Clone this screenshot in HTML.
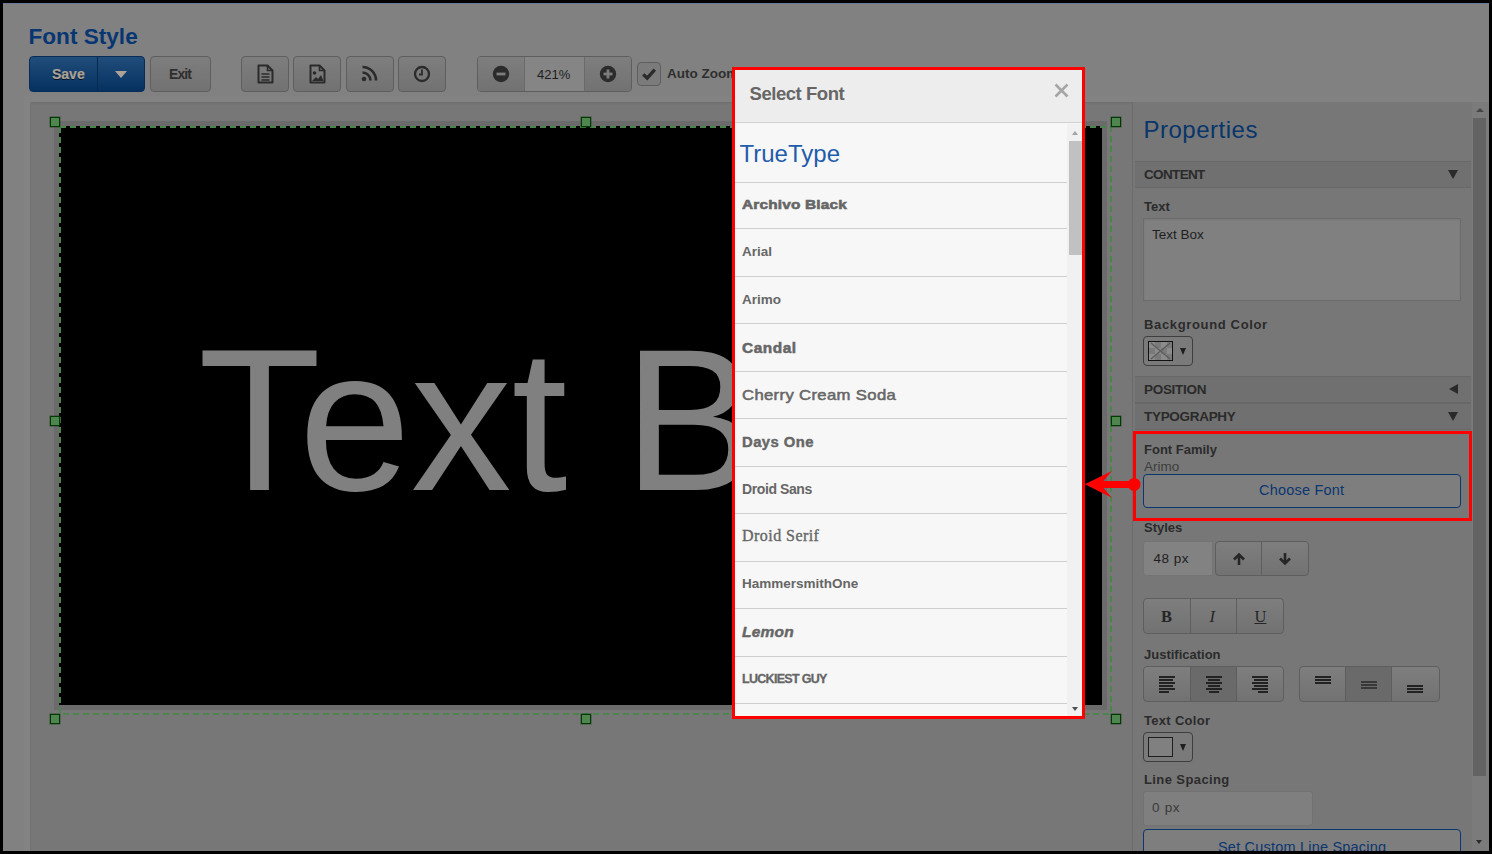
<!DOCTYPE html>
<html><head><meta charset="utf-8">
<style>
*{box-sizing:border-box;margin:0;padding:0}
html,body{width:1492px;height:854px;overflow:hidden;background:#000}
body{position:relative;font-family:"Liberation Sans",sans-serif}
.a{position:absolute}
#page{position:absolute;left:3px;top:3px;width:1486px;height:848px;background:#818181;overflow:hidden}
.t{position:absolute;white-space:nowrap;line-height:1}
.btn{position:absolute;border:1px solid #5e5e5e;border-radius:4px;background:linear-gradient(#7e7e7e,#727272)}
.hdl{position:absolute;width:10px;height:10px;border:1px solid #003a00;background:#4f854f;box-shadow:0 0 0 0.5px rgba(0,40,0,.5)}
</style></head><body>
<div id="page">
  <div class="a" style="left:0;top:0;width:1486px;height:1px;background:#6b7898"></div>
  <!-- left light strip line -->
  <div class="a" style="left:21px;top:99px;width:6px;height:760px;background:#7e7e7e"></div>
</div>

<!-- everything positioned in body coords -->
<!-- workspace -->
<div class="a" style="left:24px;top:96px;width:1448px;height:6px;background:#828282"></div>
<div class="a" style="left:24px;top:96px;width:6px;height:760px;background:#838383"></div>
<div class="a" style="left:30px;top:102px;width:1460px;height:752px;background:#777777"></div>
<div class="a" style="left:30px;top:102px;width:1102px;height:3px;background:linear-gradient(#6f6f6f,#777777)"></div>
<div class="a" style="left:30px;top:102px;width:2px;height:749px;background:linear-gradient(90deg,#727272,#777777)"></div>
<div class="a" style="left:1132px;top:102px;width:1px;height:752px;background:#6b6b6b"></div>
<!-- text box -->
<div class="a" style="left:54px;top:121px;width:1053px;height:589px;background:#6b6b6b"></div>
<div class="a" style="left:59px;top:126px;width:1043px;height:579px;background:#000"></div>
<div class="t" style="left:198px;top:320px;font-size:201.5px;color:#808080">Text Box</div>
<svg class="a" style="left:0;top:0" width="1492" height="854">
  <rect x="60" y="127" width="1051" height="587" fill="none" stroke="#4a864a" stroke-width="2" stroke-dasharray="6 4"/>
</svg>
<div class="hdl" style="left:50px;top:117px"></div>
<div class="hdl" style="left:581px;top:117px"></div>
<div class="hdl" style="left:1111px;top:117px"></div>
<div class="hdl" style="left:50px;top:416px"></div>
<div class="hdl" style="left:1111px;top:416px"></div>
<div class="hdl" style="left:50px;top:714px"></div>
<div class="hdl" style="left:581px;top:714px"></div>
<div class="hdl" style="left:1111px;top:714px"></div>

<!-- title -->
<div class="t" style="left:28.5px;top:26px;font-size:22.6px;font-weight:bold;color:#073672">Font Style</div>

<!-- Save group -->
<div class="a" style="left:29px;top:56px;width:116px;height:36px;border:1px solid #082c58;border-radius:4px;background:linear-gradient(#214d7b,#04315f)"></div>
<div class="a" style="left:97px;top:57px;width:1px;height:34px;background:#082a52"></div>
<div class="t" style="left:52px;top:67px;font-size:14px;font-weight:bold;color:#aca298;text-shadow:0 1px 0 #001020;-webkit-text-stroke:0.2px #aca298">Save</div>
<div class="a" style="left:115px;top:71px;width:0;height:0;border-left:6px solid transparent;border-right:6px solid transparent;border-top:7px solid #aca298"></div>

<!-- Exit -->
<div class="btn" style="left:150px;top:56px;width:61px;height:36px"></div>
<div class="t" style="left:169px;top:67px;font-size:14px;font-weight:bold;color:#2e2e2e;letter-spacing:-0.9px">Exit</div>

<!-- icon buttons -->
<div class="btn" style="left:241px;top:56px;width:48px;height:36px"></div>
<div class="btn" style="left:293px;top:56px;width:48px;height:36px"></div>
<div class="btn" style="left:346px;top:56px;width:48px;height:36px"></div>
<div class="btn" style="left:398px;top:56px;width:48px;height:36px"></div>
<svg class="a" style="left:257px;top:64px" width="17" height="20" viewBox="0 0 17 20"><path d="M1.5 1.5h9l5 5v12h-14z" fill="none" stroke="#2b2b2b" stroke-width="2" stroke-linejoin="round"/><path d="M10.5 1.5v5h5" fill="none" stroke="#2b2b2b" stroke-width="1.6"/><path d="M4.5 10h8M4.5 13h8M4.5 16h8" stroke="#2b2b2b" stroke-width="1.5"/></svg>
<svg class="a" style="left:309px;top:64px" width="17" height="20" viewBox="0 0 17 20"><path d="M1.5 1.5h9l5 5v12h-14z" fill="none" stroke="#2b2b2b" stroke-width="2" stroke-linejoin="round"/><path d="M10.5 1.5v5h5" fill="none" stroke="#2b2b2b" stroke-width="1.6"/><circle cx="5.5" cy="9" r="1.8" fill="#2b2b2b"/><path d="M3 17l4-4 2 2 3-4 2.5 6z" fill="#2b2b2b"/></svg>
<svg class="a" style="left:361px;top:65px" width="17" height="17" viewBox="0 0 17 17"><circle cx="3" cy="14" r="2.3" fill="#2b2b2b"/><path d="M1.5 7.5a8 8 0 0 1 8 8" fill="none" stroke="#2b2b2b" stroke-width="2.6"/><path d="M1.5 2a13.5 13.5 0 0 1 13.5 13.5" fill="none" stroke="#2b2b2b" stroke-width="2.6"/></svg>
<svg class="a" style="left:413px;top:65px" width="18" height="18" viewBox="0 0 18 18"><circle cx="9" cy="9" r="7" fill="none" stroke="#2b2b2b" stroke-width="2.3"/><path d="M9 4.5v5h-3" fill="none" stroke="#2b2b2b" stroke-width="1.8"/></svg>

<!-- zoom group -->
<div class="a" style="left:477px;top:56px;width:155px;height:36px;border:1px solid #5e5e5e;border-radius:4px;background:#858585;overflow:hidden">
  <div class="a" style="left:0;top:0;width:47px;height:34px;background:linear-gradient(#7e7e7e,#727272);border-right:1px solid #6a6a6a"></div>
  <div class="a" style="left:106px;top:0;width:48px;height:34px;background:linear-gradient(#7e7e7e,#727272);border-left:1px solid #6a6a6a"></div>
</div>
<svg class="a" style="left:492px;top:65px" width="18" height="18" viewBox="0 0 18 18"><circle cx="9" cy="9" r="8.2" fill="#2b2b2b"/><rect x="4.5" y="7.6" width="9" height="2.8" fill="#7c7c7c"/></svg>
<svg class="a" style="left:599px;top:65px" width="18" height="18" viewBox="0 0 18 18"><circle cx="9" cy="9" r="8.2" fill="#2b2b2b"/><rect x="4.5" y="7.6" width="9" height="2.8" fill="#7c7c7c"/><rect x="7.6" y="4.5" width="2.8" height="9" fill="#7c7c7c"/></svg>
<div class="t" style="left:537px;top:68px;font-size:13px;color:#1e1e1e">421%</div>

<!-- checkbox -->
<div class="a" style="left:637px;top:62px;width:24px;height:24px;border:1px solid #5e5e5e;border-radius:4px;background:#7b7b7b"></div>
<svg class="a" style="left:641px;top:66px" width="16" height="16" viewBox="0 0 16 16"><path d="M2.3 8.3l3.9 3.9 7.6-8.6" fill="none" stroke="#2b2b2b" stroke-width="3.3"/></svg>
<div class="t" style="left:667px;top:67px;font-size:13.5px;font-weight:bold;color:#2e2e2e">Auto Zoom</div>
<!-- properties panel -->
<div class="t" style="left:1143.5px;top:118.1px;font-size:24px;color:#08366b;letter-spacing:0.5px">Properties</div>
<div class="a" style="left:1135px;top:161px;width:336px;height:27px;background:#707070;border-top:1px solid #686868;border-bottom:1px solid #686868"></div>
<div class="t" style="left:1144px;top:168.0px;font-size:13.5px;color:#2a2a2a;font-weight:bold;letter-spacing:-0.65px">CONTENT</div>
<div class="a" style="left:1448px;top:170px;width:0;height:0;border-left:5px solid transparent;border-right:5px solid transparent;border-top:9px solid #2a2a2a"></div>
<div class="t" style="left:1144px;top:200.1px;font-size:13px;color:#2b2b2b;font-weight:bold">Text</div>
<div class="a" style="left:1143px;top:218px;width:318px;height:83px;background:#808080;border:1px solid #6c6c6c;box-shadow:inset 0 1px 2px rgba(0,0,0,.08)"></div>
<div class="t" style="left:1152px;top:228.1px;font-size:13.5px;color:#1e1e1e;">Text Box</div>
<div class="t" style="left:1144px;top:317.6px;font-size:13px;color:#2b2b2b;font-weight:bold;letter-spacing:0.65px">Background Color</div>
<div class="a" style="left:1143px;top:336px;width:50px;height:30px;border:1px solid #3e3e3e;border-radius:4px;background:#7a7a7a"></div>
<svg class="a" style="left:1148px;top:341px" width="25" height="20" viewBox="0 0 25 20"><rect width="25" height="20" fill="#7a7a7a"/><rect x="1" y="1" width="6" height="6" fill="#8c8c8c"/><rect x="7" y="7" width="6" height="6" fill="#8c8c8c"/><rect x="13" y="1" width="6" height="6" fill="#8c8c8c"/><rect x="19" y="7" width="6" height="6" fill="#8c8c8c"/><rect x="1" y="13" width="6" height="6" fill="#8c8c8c"/><rect x="13" y="13" width="6" height="6" fill="#8c8c8c"/><path d="M3 2l19 16M22 2L3 18" stroke="#5e5e5e" stroke-width="1.6"/><rect x="0.5" y="0.5" width="24" height="19" fill="none" stroke="#111" stroke-width="1"/></svg>
<div class="a" style="left:1179.5px;top:348px;width:0;height:0;border-left:3.6px solid transparent;border-right:3.6px solid transparent;border-top:7px solid #1e1e1e"></div>
<div class="a" style="left:1135px;top:376px;width:336px;height:27px;background:#707070;border-top:1px solid #686868;border-bottom:1px solid #686868"></div>
<div class="t" style="left:1144px;top:383.0px;font-size:13.5px;color:#2a2a2a;font-weight:bold;letter-spacing:-0.3px">POSITION</div>
<div class="a" style="left:1449px;top:384px;width:0;height:0;border-top:5px solid transparent;border-bottom:5px solid transparent;border-right:9px solid #2a2a2a"></div>
<div class="a" style="left:1135px;top:403px;width:336px;height:27px;background:#707070;border-top:1px solid #686868;border-bottom:1px solid #686868"></div>
<div class="t" style="left:1144px;top:410.3px;font-size:13.5px;color:#2a2a2a;font-weight:bold;letter-spacing:-0.3px">TYPOGRAPHY</div>
<div class="a" style="left:1448px;top:412px;width:0;height:0;border-left:5px solid transparent;border-right:5px solid transparent;border-top:9px solid #2a2a2a"></div>
<div class="t" style="left:1144px;top:443.2px;font-size:13px;color:#2b2b2b;font-weight:bold">Font Family</div>
<div class="t" style="left:1144px;top:459.5px;font-size:13.5px;color:#3e3e3e;">Arimo</div>
<div class="a" style="left:1143px;top:474px;width:318px;height:34px;border:1.5px solid #0b3670;border-radius:4px;background:#7e7e7e"></div>
<div class="t" style="left:1259px;top:483.1px;font-size:14.5px;color:#0b3670;letter-spacing:0.2px">Choose Font</div>
<div class="t" style="left:1144px;top:521.1px;font-size:13px;color:#2b2b2b;font-weight:bold">Styles</div>
<div class="a" style="left:1143px;top:541px;width:70px;height:35px;background:#828282;border:1px solid #747474;border-radius:3px 0 0 3px"></div>
<div class="t" style="left:1153.5px;top:552.4px;font-size:13.5px;color:#1e1e1e;letter-spacing:0.5px">48 px</div>
<div class="btn" style="left:1215px;top:541px;width:94px;height:35px"></div>
<div class="a" style="left:1261px;top:542px;width:1px;height:33px;background:#5e5e5e"></div>
<svg class="a" style="left:1232px;top:552px" width="14" height="14" viewBox="0 0 14 14"><path d="M7 13V3M2 7.5L7 2.5l5 5" fill="none" stroke="#262626" stroke-width="2.6"/></svg>
<svg class="a" style="left:1278px;top:552px" width="14" height="14" viewBox="0 0 14 14"><path d="M7 1v10M2 6.5l5 5 5-5" fill="none" stroke="#262626" stroke-width="2.6"/></svg>
<div class="btn" style="left:1143px;top:598px;width:141px;height:36px"></div>
<div class="a" style="left:1190px;top:599px;width:1px;height:34px;background:#5e5e5e"></div><div class="a" style="left:1236px;top:599px;width:1px;height:34px;background:#5e5e5e"></div>
<div class="t" style="left:1161px;top:608.6px;font-size:16.5px;color:#262626;font-family:&quot;Liberation Serif&quot;,serif;font-weight:bold">B</div>
<div class="t" style="left:1209.5px;top:608.6px;font-size:16.5px;color:#262626;font-family:&quot;Liberation Serif&quot;,serif;font-style:italic">I</div>
<div class="t" style="left:1254.5px;top:608.6px;font-size:16.5px;color:#262626;font-family:&quot;Liberation Serif&quot;,serif;text-decoration:underline">U</div>
<div class="t" style="left:1144px;top:648.1px;font-size:13px;color:#2b2b2b;font-weight:bold">Justification</div>
<div class="btn" style="left:1143px;top:666px;width:141px;height:36px;overflow:hidden"><div class="a" style="left:46px;top:0;width:46px;height:34px;background:#6a6a6a"></div></div>
<div class="a" style="left:1190px;top:667px;width:1px;height:34px;background:#5e5e5e"></div><div class="a" style="left:1236px;top:667px;width:1px;height:34px;background:#5e5e5e"></div>
<div class="btn" style="left:1299px;top:666px;width:141px;height:36px;overflow:hidden"><div class="a" style="left:45px;top:0;width:46px;height:34px;background:#6a6a6a"></div></div>
<div class="a" style="left:1345px;top:667px;width:1px;height:34px;background:#5e5e5e"></div><div class="a" style="left:1391px;top:667px;width:1px;height:34px;background:#5e5e5e"></div>
<div class="a" style="left:1159px;top:676px;width:16px;height:1.5px;background:#222"></div>
<div class="a" style="left:1159px;top:679px;width:14px;height:1.5px;background:#222"></div>
<div class="a" style="left:1159px;top:682px;width:16px;height:1.5px;background:#222"></div>
<div class="a" style="left:1159px;top:685px;width:14px;height:1.5px;background:#222"></div>
<div class="a" style="left:1159px;top:688px;width:16px;height:1.5px;background:#222"></div>
<div class="a" style="left:1159px;top:691px;width:10px;height:1.5px;background:#222"></div>
<div class="a" style="left:1206px;top:676px;width:16px;height:1.5px;background:#222"></div>
<div class="a" style="left:1208px;top:679px;width:12px;height:1.5px;background:#222"></div>
<div class="a" style="left:1206px;top:682px;width:16px;height:1.5px;background:#222"></div>
<div class="a" style="left:1208px;top:685px;width:12px;height:1.5px;background:#222"></div>
<div class="a" style="left:1206px;top:688px;width:16px;height:1.5px;background:#222"></div>
<div class="a" style="left:1209px;top:691px;width:10px;height:1.5px;background:#222"></div>
<div class="a" style="left:1252px;top:676px;width:16px;height:1.5px;background:#222"></div>
<div class="a" style="left:1254px;top:679px;width:14px;height:1.5px;background:#222"></div>
<div class="a" style="left:1252px;top:682px;width:16px;height:1.5px;background:#222"></div>
<div class="a" style="left:1254px;top:685px;width:14px;height:1.5px;background:#222"></div>
<div class="a" style="left:1252px;top:688px;width:16px;height:1.5px;background:#222"></div>
<div class="a" style="left:1258px;top:691px;width:10px;height:1.5px;background:#222"></div>
<div class="a" style="left:1315px;top:676px;width:16px;height:1.5px;background:#222"></div>
<div class="a" style="left:1315px;top:679px;width:16px;height:1.5px;background:#222"></div>
<div class="a" style="left:1315px;top:682px;width:16px;height:1.5px;background:#222"></div>
<div class="a" style="left:1361px;top:680.5px;width:16px;height:2px;background:#383838"></div>
<div class="a" style="left:1361px;top:683.5px;width:16px;height:2px;background:#383838"></div>
<div class="a" style="left:1361px;top:686.5px;width:16px;height:2px;background:#383838"></div>
<div class="a" style="left:1407px;top:685px;width:16px;height:1.5px;background:#222"></div>
<div class="a" style="left:1407px;top:688px;width:16px;height:1.5px;background:#222"></div>
<div class="a" style="left:1407px;top:691px;width:16px;height:1.5px;background:#222"></div>
<div class="t" style="left:1144px;top:713.7px;font-size:13px;color:#2b2b2b;font-weight:bold;letter-spacing:0.3px">Text Color</div>
<div class="a" style="left:1143px;top:732px;width:50px;height:30px;border:1px solid #3e3e3e;border-radius:4px;background:#7a7a7a"></div>
<div class="a" style="left:1148px;top:737px;width:25px;height:20px;border:1.5px solid #1e1e1e;background:#808080"></div>
<div class="a" style="left:1179.5px;top:744px;width:0;height:0;border-left:3.6px solid transparent;border-right:3.6px solid transparent;border-top:7px solid #1e1e1e"></div>
<div class="t" style="left:1144px;top:772.9px;font-size:13px;color:#2b2b2b;font-weight:bold;letter-spacing:0.4px">Line Spacing</div>
<div class="a" style="left:1143px;top:791px;width:170px;height:35px;background:#7f7f7f;border:1px solid #727272;border-radius:3px"></div>
<div class="t" style="left:1152px;top:801.4px;font-size:13.5px;color:#3a3a3a;letter-spacing:0.7px">0 px</div>
<div class="a" style="left:1143px;top:829px;width:318px;height:34px;border:1.5px solid #0b3670;border-radius:4px;background:#7e7e7e"></div>
<div class="t" style="left:1218px;top:840.3px;font-size:14.5px;color:#0b3670;letter-spacing:0.2px">Set Custom Line Spacing</div>
<div class="a" style="left:1472px;top:102px;width:17px;height:749px;background:#7b7b7b"></div>
<div class="a" style="left:1473px;top:118px;width:13px;height:658px;background:#636363"></div>
<div class="a" style="left:1476px;top:107.5px;width:0;height:0;border-left:4px solid transparent;border-right:4px solid transparent;border-bottom:4.5px solid #474747"></div>
<div class="a" style="left:1476px;top:840px;width:0;height:0;border-left:3.5px solid transparent;border-right:3.5px solid transparent;border-top:4px solid #2a2a2a"></div>

<!-- modal -->
<div class="a" style="left:732px;top:67px;width:353px;height:652px;border:3px solid #ff0000;background:#f7f7f7"></div>
<div class="a" style="left:735px;top:70px;width:347px;height:53px;background:#ededed;border-bottom:1px solid #d2d2d2"></div>
<div class="t" style="left:749.5px;top:85px;font-size:18.5px;font-weight:bold;color:#666;letter-spacing:-0.45px">Select Font</div>
<svg class="a" style="left:1054px;top:83px" width="15" height="15" viewBox="0 0 15 15"><path d="M1.5 1.5l12 12M13.5 1.5l-12 12" stroke="#a6a6a6" stroke-width="2.6"/></svg>
<div class="t" style="left:739.5px;top:141.5px;font-size:24px;color:#1f5cab">TrueType</div>
<div class="a" style="left:735px;top:182px;width:332px;height:1px;background:#cfcfcf"></div>
<div class="a" style="left:735px;top:228px;width:332px;height:1px;background:#cfcfcf"></div>
<div class="a" style="left:735px;top:276px;width:332px;height:1px;background:#cfcfcf"></div>
<div class="a" style="left:735px;top:323px;width:332px;height:1px;background:#cfcfcf"></div>
<div class="a" style="left:735px;top:371px;width:332px;height:1px;background:#cfcfcf"></div>
<div class="a" style="left:735px;top:418px;width:332px;height:1px;background:#cfcfcf"></div>
<div class="a" style="left:735px;top:466px;width:332px;height:1px;background:#cfcfcf"></div>
<div class="a" style="left:735px;top:513px;width:332px;height:1px;background:#cfcfcf"></div>
<div class="a" style="left:735px;top:561px;width:332px;height:1px;background:#cfcfcf"></div>
<div class="a" style="left:735px;top:608px;width:332px;height:1px;background:#cfcfcf"></div>
<div class="a" style="left:735px;top:656px;width:332px;height:1px;background:#cfcfcf"></div>
<div class="a" style="left:735px;top:703px;width:332px;height:1px;background:#cfcfcf"></div>
<div class="t" style="left:742px;top:198.3px;color:#666;font-weight:bold;font-size:13.4px;letter-spacing:0.15px;-webkit-text-stroke:0.6px #666;transform:scaleX(1.15);transform-origin:0 0">Archivo Black</div>
<div class="t" style="left:742px;top:244.8px;color:#666;font-weight:bold;font-size:13.5px">Arial</div>
<div class="t" style="left:742px;top:293.2px;color:#666;font-weight:bold;font-size:13.5px">Arimo</div>
<div class="t" style="left:742px;top:340.9px;color:#666;font-weight:bold;font-size:14px;letter-spacing:0.5px;-webkit-text-stroke:0.5px #666;transform:scaleX(1.1);transform-origin:0 0">Candal</div>
<div class="t" style="left:742px;top:388.1px;color:#666;font-size:14.5px;letter-spacing:0.3px;-webkit-text-stroke:0.5px #666;transform:scaleX(1.15);transform-origin:0 0">Cherry Cream Soda</div>
<div class="t" style="left:742px;top:435.1px;color:#666;font-weight:bold;font-size:14px;letter-spacing:0.4px;-webkit-text-stroke:0.4px #666;transform:scaleX(1.06);transform-origin:0 0">Days One</div>
<div class="t" style="left:742px;top:482.3px;color:#666;font-weight:bold;font-size:14px;letter-spacing:-0.4px">Droid Sans</div>
<div class="t" style="left:742px;top:528.4px;color:#666;font-family:&quot;Liberation Serif&quot;,serif;font-size:16px;letter-spacing:0.45px;-webkit-text-stroke:0.35px #666">Droid Serif</div>
<div class="t" style="left:742px;top:577.0px;color:#666;font-weight:bold;font-size:13.5px">HammersmithOne</div>
<div class="t" style="left:742px;top:624.1px;color:#666;font-weight:bold;font-style:italic;font-size:15.5px;letter-spacing:0.2px;-webkit-text-stroke:0.45px #666">Lemon</div>
<div class="t" style="left:742px;top:673.4px;color:#666;font-weight:bold;font-size:12.5px;letter-spacing:-0.7px;-webkit-text-stroke:0.3px #666">LUCKIEST GUY</div>

<!-- scrollbar -->
<div class="a" style="left:1067px;top:124px;width:15px;height:592px;background:#f1f1f1"></div>
<div class="a" style="left:1069px;top:141px;width:13px;height:114px;background:#c1c1c1"></div>
<div class="a" style="left:1072px;top:130.5px;width:0;height:0;border-left:3.5px solid transparent;border-right:3.5px solid transparent;border-bottom:4px solid #a3a3a3"></div>
<div class="a" style="left:1072px;top:707px;width:0;height:0;border-left:3.5px solid transparent;border-right:3.5px solid transparent;border-top:4px solid #505050"></div>

<!-- annotation -->
<div class="a" style="left:1133px;top:431px;width:339px;height:90px;border:3px solid #ff0000"></div>
<svg class="a" style="left:1080px;top:465px" width="65" height="40" viewBox="0 0 65 40">
  <path d="M4.9 19.2L31.85 6.1L23.4 15.9H54V23H23.4L31.85 32.8Z" fill="#ff0000"/>
  <circle cx="54.1" cy="19.4" r="6.4" fill="#ff0000"/>
</svg>

<!-- frame -->
<div class="a" style="left:0;top:0;width:1492px;height:3px;background:#000"></div>
<div class="a" style="left:0;top:851px;width:1492px;height:3px;background:#000"></div>
<div class="a" style="left:0;top:0;width:3px;height:854px;background:#000"></div>
<div class="a" style="left:1489px;top:0;width:3px;height:854px;background:#000"></div>

</body></html>
